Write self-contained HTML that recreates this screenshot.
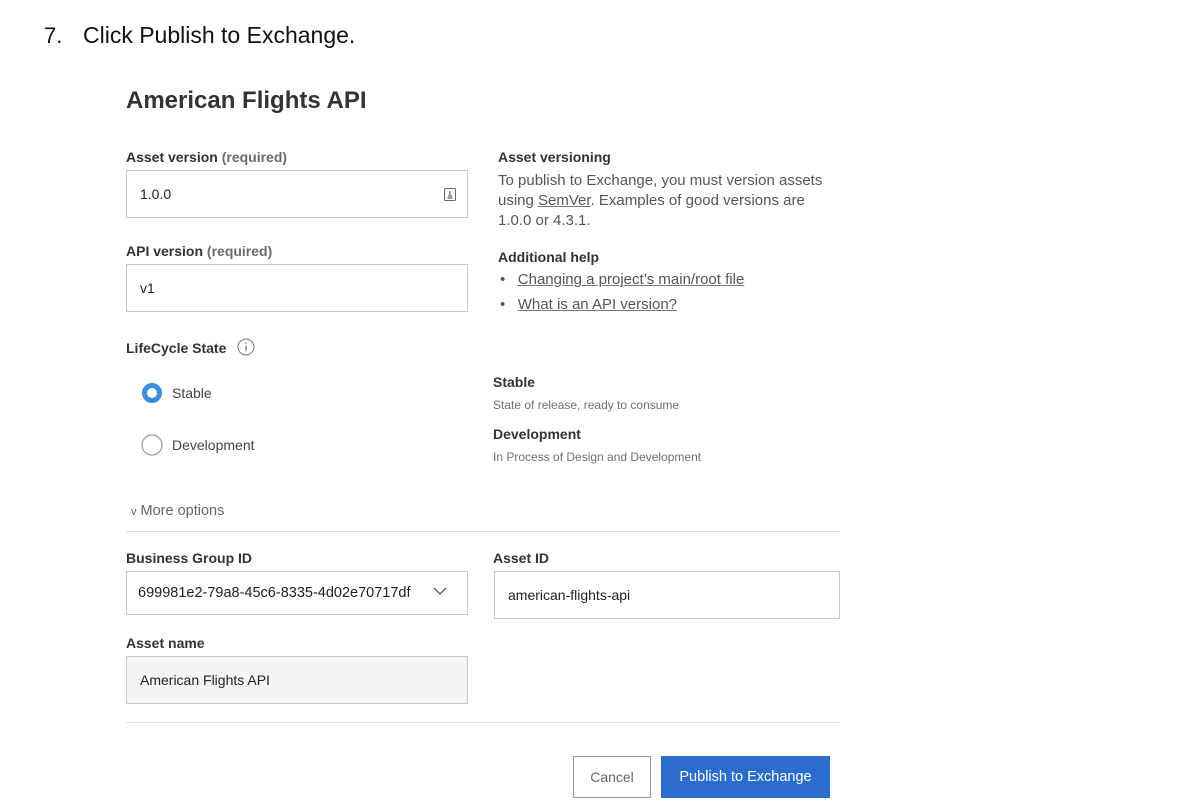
<!DOCTYPE html>
<html><head><meta charset="utf-8">
<style>
body{margin:0;width:1192px;height:808px;background:#fff;font-family:"Liberation Sans",sans-serif;color:#3a3a3a;position:relative;overflow:hidden}
.a{position:absolute;white-space:nowrap}
.lbl{font-size:14px;font-weight:bold;color:#333}
.req{color:#6b6b6b}
.box{position:absolute;border:1px solid #c8c8c8;background:#fff;box-sizing:border-box;font-size:14px;color:#222;padding-left:13px;display:flex;align-items:center}
.t{font-size:15px;color:#555}
.s{font-size:12px;color:#6f6f6f}
u{text-decoration-color:#777}
.hr{position:absolute;height:1px;background:#dcdcdc}
</style></head><body>
<div class="a" style="left:44px;top:23px;font-size:22px;color:#111">7.</div>
<div class="a" style="left:83px;top:22px;font-size:23px;color:#111">Click Publish to Exchange.</div>
<div class="a" style="left:126px;top:87px;font-size:24px;font-weight:bold;color:#333">American Flights API</div>

<div class="a lbl" style="left:126px;top:149px">Asset version <span class="req">(required)</span></div>
<div class="box" style="left:126px;top:170px;width:342px;height:48px">1.0.0
<svg style="position:absolute;left:317px;top:17px" width="12" height="13" viewBox="0 0 12 13"><rect x="0.5" y="0.5" width="11" height="12" rx="1" fill="none" stroke="#666"/><path d="M6 3v4M4 8h4M3.5 10h5" stroke="#666" stroke-width="1.2"/></svg></div>

<div class="a lbl" style="left:126px;top:243px">API version <span class="req">(required)</span></div>
<div class="box" style="left:126px;top:264px;width:342px;height:48px">v1</div>

<div class="a lbl" style="left:126px;top:340px">LifeCycle State</div>
<svg class="a" style="left:237px;top:338px" width="18" height="18" viewBox="0 0 18 18"><circle cx="9" cy="9" r="8" fill="none" stroke="#777"/><path d="M9 7.5v5.5M9 4.5v1.5" stroke="#777" stroke-width="1.3"/></svg>

<svg class="a" style="left:141px;top:382px" width="22" height="22"><circle cx="11" cy="11" r="7.5" fill="#fff" stroke="#3a8fdc" stroke-width="5"/></svg>
<div class="a" style="left:172px;top:385px;font-size:14px;color:#444">Stable</div>
<svg class="a" style="left:141px;top:434px" width="22" height="22"><circle cx="11" cy="11" r="10" fill="#fff" stroke="#999" stroke-width="1.2"/></svg>
<div class="a" style="left:172px;top:437px;font-size:14px;color:#444">Development</div>

<div class="a" style="left:131px;top:503px;font-size:14.5px;color:#666"><span style="font-size:11px">v</span> More options</div>
<div class="hr" style="left:126px;top:531px;width:714px"></div>

<div class="a lbl" style="left:126px;top:550px">Business Group ID</div>
<div class="box" style="left:126px;top:571px;width:342px;height:44px;padding-left:11px;font-size:14.5px">699981e2-79a8-45c6-8335-4d02e70717df
<svg style="position:absolute;left:306px;top:15px" width="14" height="9"><path d="M1 1l6 6 6-6" fill="none" stroke="#555" stroke-width="1.3"/></svg></div>

<div class="a lbl" style="left:493px;top:550px">Asset ID</div>
<div class="box" style="left:494px;top:571px;width:346px;height:48px">american-flights-api</div>

<div class="a lbl" style="left:126px;top:635px">Asset name</div>
<div class="box" style="left:126px;top:656px;width:342px;height:48px;background:#f4f4f4">American Flights API</div>

<div class="hr" style="left:126px;top:722px;width:714px"></div>

<div class="box" style="left:573px;top:756px;width:78px;height:42px;border-color:#999;justify-content:center;padding:0;color:#666">Cancel</div>
<div class="box" style="left:661px;top:756px;width:169px;height:42px;border:none;background:#2b6dcc;color:#fff;justify-content:center;padding:0;font-size:14.5px">Publish to Exchange</div>

<div class="a lbl" style="left:498px;top:149px">Asset versioning</div>
<div class="a t" style="left:498px;top:171px;line-height:20px">To publish to Exchange, you must version assets<br>using <u>SemVer</u>. Examples of good versions are<br>1.0.0 or 4.3.1.</div>
<div class="a lbl" style="left:498px;top:249px">Additional help</div>
<div class="a t" style="left:500px;top:271px">•&nbsp;&nbsp;&nbsp;<u>Changing a project’s main/root file</u></div>
<div class="a t" style="left:500px;top:296px">•&nbsp;&nbsp;&nbsp;<u>What is an API version?</u></div>

<div class="a lbl" style="left:493px;top:374px">Stable</div>
<div class="a s" style="left:493px;top:398px">State of release, ready to consume</div>
<div class="a lbl" style="left:493px;top:426px">Development</div>
<div class="a s" style="left:493px;top:450px">In Process of Design and Development</div>
</body></html>
